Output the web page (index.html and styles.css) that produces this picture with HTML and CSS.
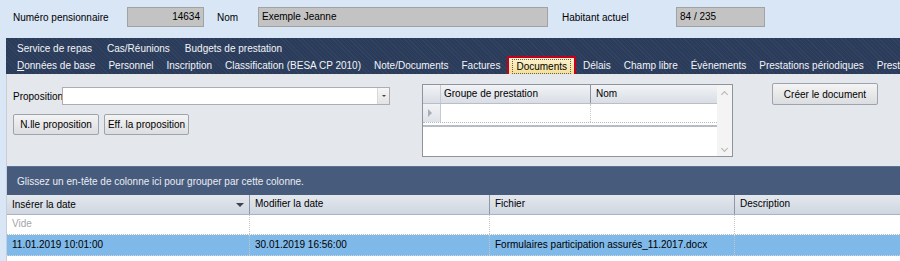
FILE: index.html
```html
<!DOCTYPE html>
<html>

<head>
  <title>Documents - Exemple Jeanne</title>
  <link rel="stylesheet" href="styles.css">
</head>

<body>
  <div id="window">
    <div class="resident-bar">
      <span class="field-label label-num">Numéro pensionnaire</span>
      <div class="readonly-box box-num">14634</div>
      <span class="field-label label-name">Nom</span>
      <div class="readonly-box box-name">Exemple Jeanne</div>
      <span class="field-label label-current">Habitant actuel</span>
      <div class="readonly-box box-current">84 / 235</div>
    </div>

    <!-- two rows of tabs, Windows Forms style -->
    <div class="tab-strip">
      <div class="tab-row">
        <span class="tab">Service de repas</span>
        <span class="tab">Cas/Réunions</span>
        <span class="tab">Budgets de prestation</span>
      </div>
      <div class="tab-row">
        <span class="tab"><u>D</u>onnées de base</span>
        <span class="tab">Personnel</span>
        <span class="tab">Inscription</span>
        <span class="tab">Classification (BESA CP 2010)</span>
        <span class="tab">Note/Documents</span>
        <span class="tab">Factures</span>
        <span class="tab tab-active"><span class="focus-rect">Documents</span></span>
        <span class="tab">Délais</span>
        <span class="tab">Champ libre</span>
        <span class="tab">Évènements</span>
        <span class="tab">Prestations périodiques</span>
        <span class="tab">Prest</span>
      </div>
    </div>

    <div class="tab-page">
      <div class="proposal-area">
        <div class="proposal-left">
          <div class="combo-row">
            <span class="combo-label">Proposition</span>
            <div class="combo">
              <div class="combo-btn"><span class="combo-arrow"></span></div>
            </div>
          </div>
          <div class="button-row">
            <button class="win-btn btn-new">N.lle proposition</button>
            <button class="win-btn btn-del">Eff. la proposition</button>
          </div>
        </div>

        <div class="small-grid">
          <div class="small-grid-body">
            <div class="sg-row sg-head">
              <div class="sg-cell sg-rowhead"></div>
              <div class="sg-cell sg-col1">Groupe de prestation</div>
              <div class="sg-cell sg-col2">Nom</div>
            </div>
            <div class="sg-row sg-data">
              <div class="sg-cell sg-rowhead"><span class="row-pointer"></span></div>
              <div class="sg-cell sg-col1"></div>
              <div class="sg-cell sg-col2"></div>
            </div>
            <div class="sg-divider"></div>
          </div>
          <div class="sg-scroll">
            <span class="chev chev-up"></span>
            <span class="chev chev-down"></span>
          </div>
        </div>

        <button class="win-btn btn-create">Créer le document</button>
      </div>

      <div class="group-panel">Glissez un en-tête de colonne ici pour grouper par cette colonne.</div>

      <div class="doc-grid">
        <div class="dg-row dg-head">
          <div class="dg-cell col-insert">Insérer la date <span class="sort-arrow"></span></div>
          <div class="dg-cell col-modify">Modifier la date</div>
          <div class="dg-cell col-file">Fichier</div>
          <div class="dg-cell col-desc">Description</div>
        </div>
        <div class="dg-row dg-new">
          <div class="dg-cell col-insert placeholder">Vide</div>
          <div class="dg-cell col-modify"></div>
          <div class="dg-cell col-file"></div>
          <div class="dg-cell col-desc"></div>
        </div>
        <div class="dg-row dg-selected">
          <div class="dg-cell col-insert">11.01.2019 10:01:00</div>
          <div class="dg-cell col-modify">30.01.2019 16:56:00</div>
          <div class="dg-cell col-file">Formulaires participation assurés_11.2017.docx</div>
          <div class="dg-cell col-desc"></div>
        </div>
      </div>
    </div>
  </div>
</body>

</html>
```

FILE: styles.css
```css
body,
html {
  margin: 0;
  padding: 0;
}

#window {
  width: 900px;
  height: 261px;
  overflow: hidden;
  background: #d9e6f6;
  font-family: "Liberation Sans", Arial, sans-serif;
  font-size: 10px;
  color: #000;
}

/* resident header */
.resident-bar {
  display: flex;
  align-items: center;
  height: 38px;
  padding: 5px 0 9px 13px;
  box-sizing: border-box;
}

.field-label {
  white-space: nowrap;
}

.label-num {
  width: 114px;
}

.label-name {
  width: 41px;
  margin-left: 13px;
}

.label-current {
  width: 114px;
  margin-left: 14px;
}

.readonly-box {
  height: 20px;
  line-height: 18px;
  box-sizing: border-box;
  background: #c3c3c3;
  border: 1px solid #a2a2a2;
  padding: 0 3px;
}

.box-num {
  width: 77px;
  text-align: right;
}

.box-name {
  width: 290px;
}

.box-current {
  width: 89px;
}

/* tabs */
.tab-strip {
  margin-left: 6px;
  height: 36px;
  padding: 2px 0 0 4px;
  box-sizing: border-box;
  background-color: #2b3c5b;
  background-image: repeating-linear-gradient(45deg, rgba(255, 255, 255, 0.035) 0 1px, transparent 1px 3px);
  color: #f2f4f8;
  overflow: hidden;
}

.tab-row {
  display: flex;
  height: 17px;
  white-space: nowrap;
}

.tab {
  padding: 0 6px 0 7px;
  line-height: 17px;
}

.tab-row:first-child .tab {
  padding: 0 8px 0 7px;
}

.tab-active {
  position: relative;
  z-index: 1;
  height: 21px;
  margin: -1px 0 0 1px;
  padding: 0 3px;
  box-sizing: border-box;
  border: 2px solid #c4001a;
  background: linear-gradient(#fcf3cf, #f2de97);
  color: #000;
  line-height: 15px;
}

.focus-rect {
  display: inline-block;
  margin-top: 1px;
  padding: 0 3px;
  line-height: 13px;
  border: 1px dotted #6b6040;
}

/* tab page */
.tab-page {
  margin-left: 6px;
  height: 187px;
  background: #e4e7ec;
  border-left: 1px solid #c9ced6;
}

.proposal-area {
  display: flex;
  align-items: flex-start;
  height: 92px;
  padding-top: 9px;
  box-sizing: border-box;
}

.proposal-left {
  width: 415px;
  padding-left: 6px;
  margin-top: 4px;
  box-sizing: border-box;
}

.combo-row {
  display: flex;
  align-items: center;
}

.combo-label {
  width: 49px;
}

.combo {
  position: relative;
  width: 328px;
  height: 18px;
  box-sizing: border-box;
  background: #fff;
  border: 1px solid #abadb3;
}

.combo-btn {
  position: absolute;
  right: 0;
  top: 0;
  bottom: 0;
  width: 11px;
  border-left: 1px solid #d5d8de;
  background: linear-gradient(#f6f6f6, #e3e3e3);
  display: flex;
  align-items: center;
  justify-content: center;
}

.combo-arrow {
  width: 0;
  height: 0;
  border-left: 2px solid transparent;
  border-right: 2px solid transparent;
  border-top: 2px solid #444;
}

.button-row {
  display: flex;
  gap: 5px;
  margin-top: 9px;
}

.win-btn {
  height: 21px;
  padding: 0;
  font-family: inherit;
  font-size: 10px;
  color: #000;
  background: linear-gradient(#f4f4f4, #dcdde0);
  border: 1px solid #9ea4ae;
  border-radius: 2px;
}

.btn-new {
  width: 86px;
}

.btn-del {
  width: 85px;
}

.btn-create {
  width: 106px;
  height: 22px;
  margin-left: 39px;
}

/* small grid */
.small-grid {
  display: flex;
  width: 311px;
  height: 73px;
  margin-top: 1px;
  box-sizing: border-box;
  border: 1px solid #8f949c;
  background: #fff;
}

.small-grid-body {
  flex: 1;
}

.sg-row {
  display: flex;
}

.sg-head {
  height: 18px;
  background: linear-gradient(#f1f3f6, #d9dde4);
  border-bottom: 1px solid #b9bfc9;
}

.sg-head .sg-cell {
  line-height: 18px;
}

.sg-cell {
  box-sizing: border-box;
}

.sg-rowhead {
  width: 18px;
  border-right: 1px solid #c5cad2;
}

.sg-col1 {
  width: 150px;
  padding-left: 3px;
  border-right: 1px solid #9aa1ac;
}

.sg-head .sg-col1 {
  border-right-color: #8c939e;
}

.sg-col2 {
  flex: 1;
  padding-left: 5px;
}

.sg-data {
  height: 18px;
  border-bottom: 1px dotted #b8b8b8;
}

.sg-data .sg-rowhead {
  background: linear-gradient(#f1f3f6, #dfe2e8);
  display: flex;
  align-items: center;
  padding-left: 5px;
}

.sg-data .sg-col1 {
  border-right: 1px dotted #c8c8c8;
}

.row-pointer {
  width: 0;
  height: 0;
  border-top: 4px solid transparent;
  border-bottom: 4px solid transparent;
  border-left: 4px solid #a9adb4;
}

.sg-divider {
  height: 2px;
  margin-top: 2px;
  background: #b7bcc4;
}

.sg-scroll {
  width: 15px;
  background: #f4f4f4;
  display: flex;
  flex-direction: column;
  justify-content: space-between;
  align-items: center;
  padding: 6px 0 5px;
  box-sizing: border-box;
}

.chev {
  width: 4px;
  height: 4px;
  border-left: 1px solid #b4b4b4;
  border-top: 1px solid #b4b4b4;
}

.chev-up {
  transform: rotate(45deg);
  margin-top: 1px;
}

.chev-down {
  transform: rotate(225deg);
}

/* grouping panel + main grid */
.group-panel {
  height: 29px;
  line-height: 30px;
  padding-left: 10px;
  background: #475b7d;
  border-top: 1px solid #5f7192;
  box-sizing: border-box;
  color: #e9edf3;
}

.doc-grid {
  background: #fff;
  height: 66px;
}

.dg-row {
  display: flex;
  white-space: nowrap;
}

.dg-cell {
  box-sizing: border-box;
  padding-left: 5px;
  overflow: hidden;
}

.col-insert {
  width: 242px;
}

.col-modify {
  width: 240px;
}

.col-file {
  width: 245px;
}

.col-desc {
  flex: 1;
}

.dg-head {
  height: 19px;
  line-height: 18px;
  background: linear-gradient(#e4e8ee, #cfd6e0);
  border-bottom: 1px solid #aab3c1;
}

.dg-head .dg-cell + .dg-cell {
  border-left: 1px solid #8e98a8;
}

.dg-head .col-insert {
  display: flex;
  justify-content: space-between;
  align-items: center;
  padding-right: 5px;
}

.sort-arrow {
  width: 0;
  height: 0;
  border-left: 4px solid transparent;
  border-right: 4px solid transparent;
  border-top: 4px solid #3d4350;
}

.dg-new {
  height: 19px;
  line-height: 18px;
  border-bottom: 1px dotted #bdbdbd;
}

.dg-new .dg-cell + .dg-cell,
.dg-selected .dg-cell + .dg-cell {
  border-left: 1px dotted #c6c6c6;
}

.placeholder {
  color: #a6a6a6;
}

.dg-selected {
  height: 20px;
  line-height: 19px;
  background: #7fb9e9;
  border-bottom: 1px dotted #c8d3dc;
}
```
